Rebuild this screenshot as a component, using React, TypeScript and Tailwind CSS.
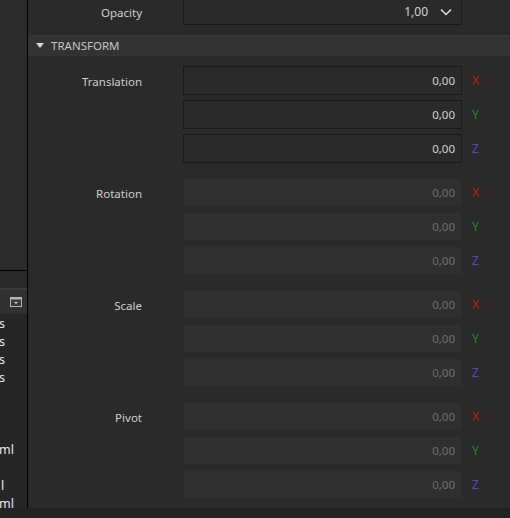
import React from 'react';

type Axis = 'X' | 'Y' | 'Z';

const axisColor: Record<Axis, string> = {
  X: 'text-[#c81414]',
  Y: 'text-[#14901e]',
  Z: 'text-[#4a4ad8]',
};

const groups = [
  { label: 'Translation', enabled: true },
  { label: 'Rotation', enabled: false },
  { label: 'Scale', enabled: false },
  { label: 'Pivot', enabled: false },
];

const listRows = ['s', 's', 's', 's', '', '', '', 'ml', '', 'l', 'ml'];

function Field({ axis, enabled }: { axis: Axis; enabled: boolean }) {
  return (
    <div className="flex items-center h-[29px]">
      <div
        className={
          enabled
            ? 'w-[279px] h-full flex items-center justify-end pr-[6px] border border-[#1a1a1a] bg-[#2a2a2a] text-[#d2d2d2]'
            : 'w-[279px] h-full flex items-center justify-end pr-[6px] border border-[#2a2a2a] bg-[#2f2f2f] text-[#6e6e6e]'
        }
      >
        0,00
      </div>
      <span className={`ml-[10px] text-[12px] ${axisColor[axis]}`}>{axis}</span>
    </div>
  );
}

function Group({ label, enabled }: { label: string; enabled: boolean }) {
  return (
    <div className="flex">
      <div className="w-[155px] pr-[41px] pt-[10px] text-right text-[#cfcfcf]">{label}</div>
      <div className="flex flex-col gap-[5px]">
        {(['X', 'Y', 'Z'] as Axis[]).map((a) => (
          <Field key={a} axis={a} enabled={enabled} />
        ))}
      </div>
    </div>
  );
}

export default function App() {
  return (
    <div
      className="w-[510px] h-[518px] flex flex-col bg-[#2a2a2a] overflow-hidden text-[11.5px] leading-none"
      style={{ fontFamily: '"Noto Sans", "Open Sans", sans-serif' }}
    >
      <div className="flex flex-1 min-h-0">
        {/* left dock, clipped */}
        <div className="w-[28px] flex flex-col border-r border-black overflow-hidden">
          <div className="h-[271px] shrink-0 bg-[#2c2c2c] border-b border-black" />
          <div className="h-[17px] shrink-0 bg-[#2a2a2a]" />
          <div className="h-[26px] shrink-0 bg-[#303030] border-t-2 border-[#3a3a3a] flex items-center justify-end pr-[5px]">
            <svg width="12" height="10" viewBox="0 0 12 10">
              <rect x="0.5" y="0.5" width="11" height="9" fill="#3a3a3a" stroke="#b4b4b4" />
              <rect x="1" y="1" width="10" height="1.5" fill="#b4b4b4" />
              <path d="M4 5h4l-2 2z" fill="#d0d0d0" />
            </svg>
          </div>
          <div className="flex-1 min-h-0 overflow-hidden bg-[#262626] pt-[1px] text-[#e8e8e8] text-[12.5px]">
            {listRows.map((t, i) => (
              <div key={i} className={i === 9 ? 'h-[18px] flex items-center pl-[1px]' : 'h-[18px] flex items-center -ml-[1px]'}>
                {t}
              </div>
            ))}
          </div>
        </div>

        {/* property editor */}
        <div className="flex-1 flex flex-col">
          <div className="flex h-[25px]">
            <div className="w-[155px] pr-[41px] flex items-center justify-end text-[#cfcfcf]">Opacity</div>
            <div className="w-[279px] h-full border-x border-b border-[#1a1a1a] flex items-center justify-end pr-[9px] text-[#d2d2d2] text-[12px]">
              1,00
              <svg className="ml-[12px]" width="12" height="8" viewBox="0 0 12 8">
                <path d="M1 1.5l5 5 5-5" fill="none" stroke="#e6e6e6" strokeWidth="1.5" />
              </svg>
            </div>
          </div>
          <div className="mt-[10px] h-[21px] bg-[#333333] flex items-center pl-[8px] text-[#c4c4c4] text-[11.5px]">
            <svg width="8" height="5" viewBox="0 0 8 5">
              <path d="M0 0h8L4 5z" fill="#d8d8d8" />
            </svg>
            <span className="ml-[7px]">TRANSFORM</span>
          </div>
          <div className="mt-[10px] flex flex-col gap-[15px]">
            {groups.map((g) => (
              <Group key={g.label} label={g.label} enabled={g.enabled} />
            ))}
          </div>
        </div>
      </div>
      <div className="h-[10px] bg-[#222222]" />
    </div>
  );
}
